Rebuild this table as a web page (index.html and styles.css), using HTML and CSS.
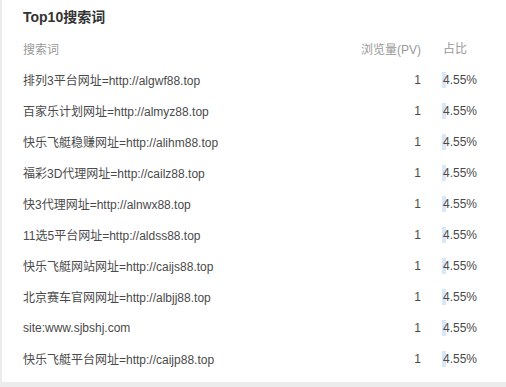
FILE: index.html
```html
<!DOCTYPE html>
<html lang="zh-CN">
<head>
<meta charset="utf-8">
<title>Top10搜索词</title>
<link rel="stylesheet" href="styles.css">
</head>
<body>
<div class="card">
  <h2 class="title">Top10搜索词</h2>
  <div class="table">
    <div class="row head">
      <div class="c-term">搜索词</div>
      <div class="c-pv">浏览量(PV)</div>
      <div class="c-pct">占比</div>
    </div>
    <div class="row"><div class="c-term">排列3平台网址=http://algwf88.top</div><div class="c-pv">1</div><div class="c-pct"><span class="bar" style="width:4.55%"></span><span class="val">4.55%</span></div></div>
    <div class="row"><div class="c-term">百家乐计划网址=http://almyz88.top</div><div class="c-pv">1</div><div class="c-pct"><span class="bar" style="width:4.55%"></span><span class="val">4.55%</span></div></div>
    <div class="row"><div class="c-term">快乐飞艇稳赚网址=http://alihm88.top</div><div class="c-pv">1</div><div class="c-pct"><span class="bar" style="width:4.55%"></span><span class="val">4.55%</span></div></div>
    <div class="row"><div class="c-term">福彩3D代理网址=http://cailz88.top</div><div class="c-pv">1</div><div class="c-pct"><span class="bar" style="width:4.55%"></span><span class="val">4.55%</span></div></div>
    <div class="row"><div class="c-term">快3代理网址=http://alnwx88.top</div><div class="c-pv">1</div><div class="c-pct"><span class="bar" style="width:4.55%"></span><span class="val">4.55%</span></div></div>
    <div class="row"><div class="c-term">11选5平台网址=http://aldss88.top</div><div class="c-pv">1</div><div class="c-pct"><span class="bar" style="width:4.55%"></span><span class="val">4.55%</span></div></div>
    <div class="row"><div class="c-term">快乐飞艇网站网址=http://caijs88.top</div><div class="c-pv">1</div><div class="c-pct"><span class="bar" style="width:4.55%"></span><span class="val">4.55%</span></div></div>
    <div class="row"><div class="c-term">北京赛车官网网址=http://albjj88.top</div><div class="c-pv">1</div><div class="c-pct"><span class="bar" style="width:4.55%"></span><span class="val">4.55%</span></div></div>
    <div class="row"><div class="c-term">site:www.sjbshj.com</div><div class="c-pv">1</div><div class="c-pct"><span class="bar" style="width:4.55%"></span><span class="val">4.55%</span></div></div>
    <div class="row"><div class="c-term">快乐飞艇平台网址=http://caijp88.top</div><div class="c-pv">1</div><div class="c-pct"><span class="bar" style="width:4.55%"></span><span class="val">4.55%</span></div></div>
  </div>
</div>
</body>
</html>
```

FILE: styles.css
```css
html, body {
  margin: 0;
  padding: 0;
  background: #ececec;
  font-family: "Liberation Sans", Arial, "Noto Sans CJK SC", sans-serif;
}
.card {
  margin-left: 2px;
  background: #fff;
  height: 382px;
  box-sizing: border-box;
  padding: 7px 20px 7px 21px;
}
.title {
  margin: 0 0 6px 0;
  font-size: 14px;
  line-height: 20px;
  font-weight: bold;
  color: #333;
}
.table {
  display: flex;
  flex-direction: column;
}
.row {
  display: grid;
  grid-template-columns: 1fr 80px 43px;
  column-gap: 22px;
  height: 31px;
  align-items: center;
  font-size: 12px;
  color: #4a4a4a;
}
.row.head {
  color: #999;
}
.c-term {
  white-space: nowrap;
}
.c-pv {
  text-align: right;
}
.c-pct {
  position: relative;
  height: 16px;
  line-height: 16px;
  white-space: nowrap;
}
.bar {
  position: absolute;
  left: -1px;
  top: 0;
  height: 16px;
  min-width: 4px;
  background: #d9e8f8;
}
.val {
  position: relative;
}
```
